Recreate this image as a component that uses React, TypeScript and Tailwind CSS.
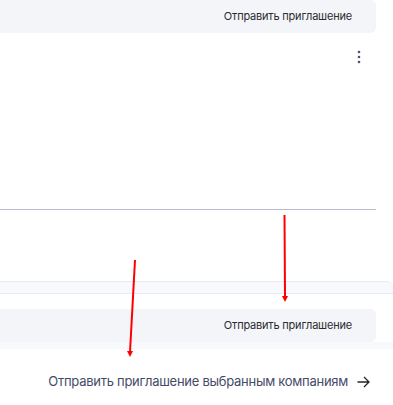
const font = { fontFamily: 'Inter, "Noto Sans", sans-serif' };

const InviteBar = () => (
  <div className="flex h-[33px] w-[376px] items-center justify-end rounded-r-md bg-[#f4f5f9] pr-[24px] text-[11px] tracking-[-0.2px] text-[#2a2c33]">
    Отправить приглашение
  </div>
);

const App = () => {
  return (
    <div className="relative h-[405px] w-[393px] overflow-hidden bg-white" style={font}>
      <InviteBar />

      <div className="flex h-[177px] w-[376px] flex-col border-b border-[#b8bccf]">
        <div className="flex justify-end pr-[14px] pt-[17px]">
          <svg width="6" height="14" viewBox="0 0 6 14" className="text-[#4b5270]">
            <circle cx="3" cy="2" r="1.3" fill="currentColor" />
            <circle cx="3" cy="7" r="1.3" fill="currentColor" />
            <circle cx="3" cy="12" r="1.3" fill="currentColor" />
          </svg>
        </div>
      </div>

      <div className="h-[71px]" />
      <div className="h-[13px] w-full rounded-tr-md border-y border-[#e8eaf2] bg-[#f8f9fc]" />

      <div className="pt-[15px]">
        <InviteBar />
      </div>
      <div className="h-[7px] w-full bg-[#f8f9fc]" />

      <div className="flex items-center justify-end gap-[9px] pr-[23px] pt-[23px] text-[13px] tracking-[-0.27px] text-[#444b68]">
        <span>Отправить приглашение выбранным компаниям</span>
        <svg width="13" height="12" viewBox="0 0 13 12" fill="none" stroke="#23252c" strokeWidth="1.3">
          <path d="M0.5 6H12M7 1l5 5-5 5" />
        </svg>
      </div>

      {/* red annotation arrows */}
      <svg className="pointer-events-none absolute left-0 top-0" width="393" height="405">
        <g stroke="#ff0000" strokeWidth="2" fill="#ff0000">
          <line x1="284.5" y1="215" x2="285" y2="297" />
          <path d="M282 296 L288 296 L285 302 Z" stroke="none" />
          <line x1="135" y1="260" x2="130" y2="352" />
          <path d="M127 351 L133 351 L130 357 Z" stroke="none" />
        </g>
      </svg>
    </div>
  );
};

export default App;
